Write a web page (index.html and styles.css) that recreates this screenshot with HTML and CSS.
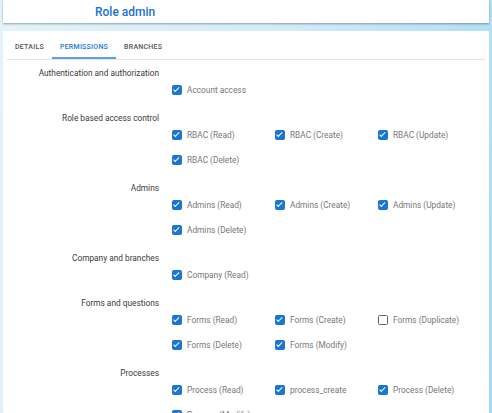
FILE: index.html
```html
<!DOCTYPE html>
<html>
<head>
<meta charset="utf-8">
<link rel="stylesheet" href="styles.css">
</head>
<body>
<div class="page">
  <header class="head-card">
    <h1 class="title">Role admin</h1>
  </header>
  <main class="main-card">
    <nav class="tabs">
      <span class="tab">DETAILS</span>
      <span class="tab active">PERMISSIONS</span>
      <span class="tab">BRANCHES</span>
    </nav>
    <div class="content">
      <section class="section">
        <div class="label">Authentication and authorization</div>
        <div class="checks">
          <label class="check"><span class="box on"></span>Account access</label>
        </div>
      </section>
      <section class="section">
        <div class="label">Role based access control</div>
        <div class="checks">
          <label class="check"><span class="box on"></span>RBAC (Read)</label>
          <label class="check"><span class="box on"></span>RBAC (Create)</label>
          <label class="check"><span class="box on"></span>RBAC (Update)</label>
          <label class="check"><span class="box on"></span>RBAC (Delete)</label>
        </div>
      </section>
      <section class="section">
        <div class="label">Admins</div>
        <div class="checks">
          <label class="check"><span class="box on"></span>Admins (Read)</label>
          <label class="check"><span class="box on"></span>Admins (Create)</label>
          <label class="check"><span class="box on"></span>Admins (Update)</label>
          <label class="check"><span class="box on"></span>Admins (Delete)</label>
        </div>
      </section>
      <section class="section">
        <div class="label">Company and branches</div>
        <div class="checks">
          <label class="check"><span class="box on"></span>Company (Read)</label>
        </div>
      </section>
      <section class="section">
        <div class="label">Forms and questions</div>
        <div class="checks">
          <label class="check"><span class="box on"></span>Forms (Read)</label>
          <label class="check"><span class="box on"></span>Forms (Create)</label>
          <label class="check"><span class="box"></span>Forms (Duplicate)</label>
          <label class="check"><span class="box on"></span>Forms (Delete)</label>
          <label class="check"><span class="box on"></span>Forms (Modify)</label>
        </div>
      </section>
      <section class="section">
        <div class="label">Processes</div>
        <div class="checks">
          <label class="check"><span class="box on"></span>Process (Read)</label>
          <label class="check"><span class="box on"></span>process_create</label>
          <label class="check"><span class="box on"></span>Process (Delete)</label>
          <label class="check"><span class="box on"></span>Process (Modify)</label>
        </div>
      </section>
    </div>
  </main>
</div>
</body>
</html>
```
FILE: styles.css
```css
html, body {
  margin: 0;
  padding: 0;
  height: 100%;
}
body {
  font-family: Roboto, "Liberation Sans", sans-serif;
  background: linear-gradient(100deg, #e4f3fb 0%, #d3ecf9 50%, #a9daf3 100%);
  overflow: hidden;
}
.page {
  padding: 0 3px 0 3px;
}
.head-card {
  background: #fff;
  height: 23px;
  box-shadow: 0 1px 2px rgba(0, 0, 0, 0.35);
  display: flex;
  align-items: center;
  padding-left: 92px;
}
.title {
  margin: 0;
  font-size: 12px;
  font-weight: 500;
  color: #1a73d0;
  line-height: 20px;
}
.main-card {
  background: #fff;
  margin-top: 8px;
  padding: 0 4px;
  min-height: 400px;
}
.tabs {
  display: flex;
  height: 28px;
  border-bottom: 1px solid #e2e2e2;
}
.tab {
  padding: 0 8px;
  font-size: 7px;
  font-weight: 500;
  letter-spacing: 0.25px;
  color: #555;
  display: flex;
  align-items: center;
  padding-top: 3px;
  box-sizing: border-box;
}
.tab.active {
  color: #1976d2;
  box-shadow: inset 0 -2px 0 #5aa2e0;
}
.content {
  padding-top: 8px;
}
.section {
  margin-bottom: 15.5px;
}
.label {
  width: 152px;
  text-align: right;
  font-size: 8.3px;
  line-height: 10px;
  font-weight: 400;
  color: #3a3a3a;
  margin-bottom: 3.5px;
}
.checks {
  display: grid;
  grid-template-columns: repeat(3, 103px);
  grid-auto-rows: 16px;
  row-gap: 9px;
  margin-left: 165px;
}
.check {
  display: flex;
  align-items: center;
  gap: 5px;
  font-size: 8.3px;
  color: #777;
  white-space: nowrap;
}
.box {
  width: 10px;
  height: 10px;
  box-sizing: border-box;
  border: 1.5px solid #666;
  border-radius: 1.5px;
  flex: none;
  position: relative;
}
.box.on {
  background: #1976d2;
  border-color: #1976d2;
}
.box.on::after {
  content: "";
  position: absolute;
  left: 2.2px;
  top: 0.3px;
  width: 2.2px;
  height: 4.6px;
  border: solid #fff;
  border-width: 0 1.2px 1.2px 0;
  transform: rotate(45deg);
}
```
